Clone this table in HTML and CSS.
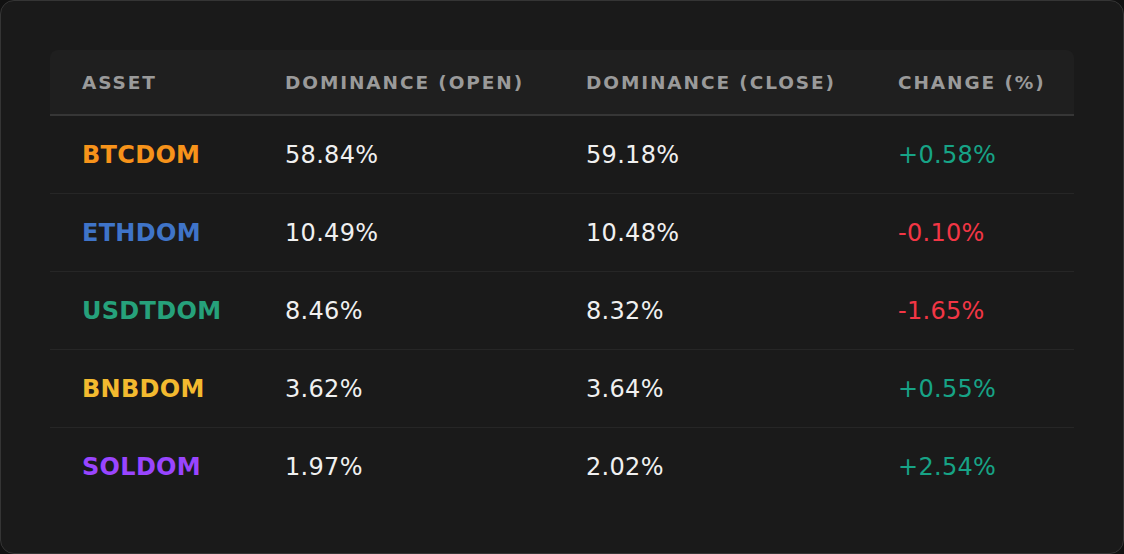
FILE: index.html
```html
<!DOCTYPE html>
<html>
<head>
<meta charset="utf-8">
<link rel="stylesheet" href="styles.css">
</head>
<body>
<div class="card">
  <table class="dom-table">
    <colgroup>
      <col class="c1"><col class="c2"><col class="c3"><col class="c4">
    </colgroup>
    <thead>
      <tr>
        <th>Asset</th>
        <th>Dominance (Open)</th>
        <th>Dominance (Close)</th>
        <th>Change (%)</th>
      </tr>
    </thead>
    <tbody>
      <tr>
        <td class="asset btc">BTCDOM</td>
        <td>58.84%</td>
        <td>59.18%</td>
        <td class="up">+0.58%</td>
      </tr>
      <tr>
        <td class="asset eth">ETHDOM</td>
        <td>10.49%</td>
        <td>10.48%</td>
        <td class="down">-0.10%</td>
      </tr>
      <tr>
        <td class="asset usdt">USDTDOM</td>
        <td>8.46%</td>
        <td>8.32%</td>
        <td class="down">-1.65%</td>
      </tr>
      <tr>
        <td class="asset bnb">BNBDOM</td>
        <td>3.62%</td>
        <td>3.64%</td>
        <td class="up">+0.55%</td>
      </tr>
      <tr>
        <td class="asset sol">SOLDOM</td>
        <td>1.97%</td>
        <td>2.02%</td>
        <td class="up">+2.54%</td>
      </tr>
    </tbody>
  </table>
</div>
</body>
</html>
```

FILE: styles.css
```css
html, body {
  margin: 0;
  padding: 0;
  background: #111111;
}

body {
  font-family: "DejaVu Sans", "Liberation Sans", sans-serif;
}

.card {
  box-sizing: border-box;
  width: 1124px;
  height: 554px;
  background: #1a1a1a;
  border: 1px solid #353535;
  border-radius: 14px;
  padding: 49px;
}

.dom-table {
  width: 1024px;
  border-collapse: separate;
  border-spacing: 0;
  table-layout: fixed;
}

.c1 { width: 203px; }
.c2 { width: 301px; }
.c3 { width: 312px; }
.c4 { width: 208px; }

.dom-table th {
  height: 64px;
  padding: 0 0 0 32px;
  text-align: left;
  font-size: 18.5px;
  font-weight: bold;
  letter-spacing: 1.9px;
  text-transform: uppercase;
  color: #9a9a9a;
  background: #1f1f1f;
  border-bottom: 2px solid #363636;
  white-space: nowrap;
}

.dom-table th:first-child { border-top-left-radius: 8px; }
.dom-table th:last-child { border-top-right-radius: 8px; }

.dom-table td {
  height: 77px;
  padding: 0 0 0 32px;
  font-size: 24px;
  letter-spacing: 0.3px;
  color: #f0f0f0;
  border-bottom: 1px solid #262626;
  white-space: nowrap;
}

.dom-table tbody tr:last-child td { border-bottom: none; }

.asset { font-weight: bold; letter-spacing: 0; }
.btc { color: #f7931a !important; }
.eth { color: #3f74c8 !important; }
.usdt { color: #26a17b !important; }
.bnb { color: #f3ba2f !important; }
.sol { color: #9945ff !important; }

.up { color: #17a386 !important; }
.down { color: #f23645 !important; }
```
